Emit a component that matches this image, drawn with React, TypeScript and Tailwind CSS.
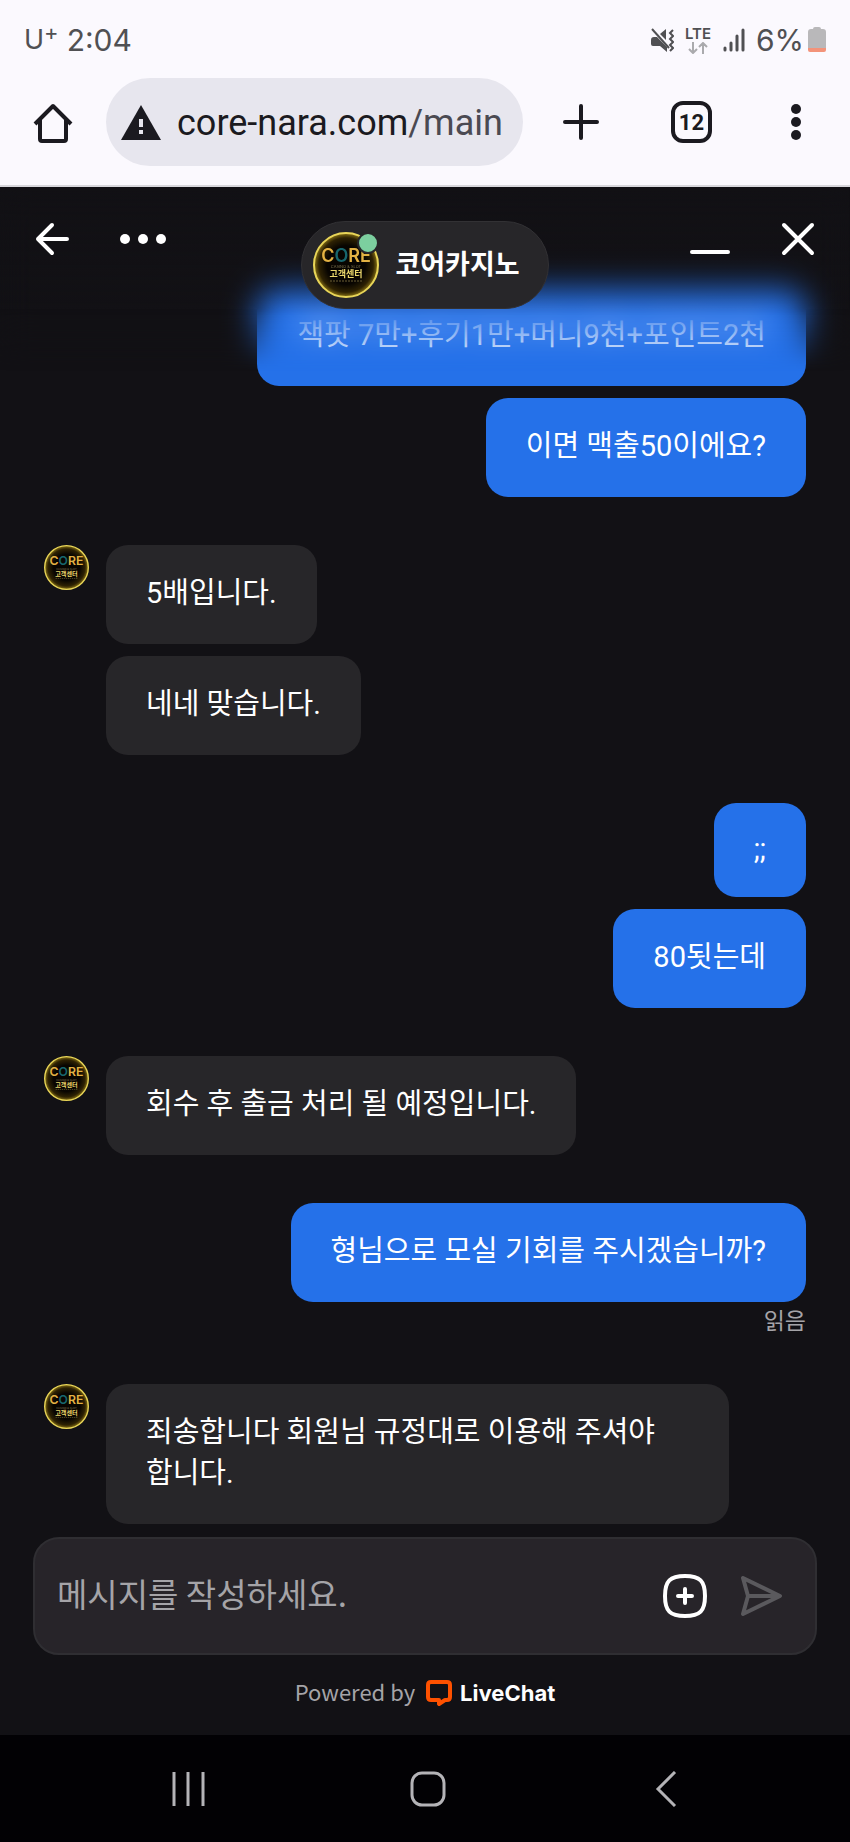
import React from 'react';

interface MessageGroup {
  id: number;
  from: 'agent' | 'visitor';
  messages: string[];
  read?: boolean;
}

const groups: MessageGroup[] = [
  {
    id: 1,
    from: 'visitor',
    messages: ['잭팟 7만+후기1만+머니9천+포인트2천', '이면 맥출50이에요?'],
  },
  { id: 2, from: 'agent', messages: ['5배입니다.', '네네 맞습니다.'] },
  { id: 3, from: 'visitor', messages: [';;', '80됫는데'] },
  { id: 4, from: 'agent', messages: ['회수 후 출금 처리 될 예정입니다.'] },
  { id: 5, from: 'visitor', messages: ['형님으로 모실 기회를 주시겠습니까?'], read: true },
  { id: 6, from: 'agent', messages: ['죄송합니다 회원님 규정대로 이용해 주셔야 합니다.'] },
];

const Avatar: React.FC<{ className: string }> = ({ className }) => (
  <svg viewBox="0 0 66 66" className={className} role="img" aria-label="CORE 고객센터">
    <defs>
      <radialGradient id="avatarGlow">
        <stop offset="0.6" stopColor="#080501" />
        <stop offset="0.85" stopColor="#2e2203" />
        <stop offset="1" stopColor="#8a7416" />
      </radialGradient>
    </defs>
    <circle cx="33" cy="33" r="32" fill="url(#avatarGlow)" stroke="#e8d558" strokeWidth="2" />
    <text
      x="33"
      y="30"
      fontSize="18"
      fontWeight="600"
      textAnchor="middle"
      fill="#e3b243"
      fontFamily="Inter, 'Liberation Sans', sans-serif"
    >
      C<tspan fill="#17666d">O</tspan>RE
    </text>
    <text x="33" y="36" fontSize="4" textAnchor="middle" fill="#7d7350" fontFamily="Inter, sans-serif">
      CASINO &amp; SLOT
    </text>
    <text
      x="33"
      y="45"
      fontSize="9"
      fontWeight="700"
      textAnchor="middle"
      fill="#ecd86c"
      fontFamily="'Noto Sans CJK KR', sans-serif"
    >
      고객센터
    </text>
    <path d="M17 49h33" stroke="#6d6136" strokeWidth="1" strokeDasharray="2 1" />
  </svg>
);

const StatusBar: React.FC = () => (
  <div className="flex h-16 items-center justify-between pt-4 pr-6 pl-6 font-['Inter','Liberation_Sans',sans-serif] text-[30px] text-[#505053]">
    <div className="flex items-center gap-2">
      <span className="flex">
        <span className="text-[27px]">U</span>
        <sup className="top-0 self-start text-[22px] leading-6">+</sup>
      </span>
      <span>2:04</span>
    </div>
    <div className="flex items-center gap-[10px]">
      <svg viewBox="0 0 24 24" className="h-6 w-6" fill="#505053" aria-label="진동">
        <path d="M1 12q0-3 3-3h3l10 10v5l-7-6H3q-2 0-2-2z" />
        <path d="M10 6l6-5v11z" />
        <path d="M2 1l17 19" stroke="#505053" strokeWidth="2" />
        <path d="M23 2l-3 3 3 3-3 3 3 3-3 3 3 3-3 3" fill="none" stroke="#505053" strokeWidth="2" />
      </svg>
      <div className="flex w-7 flex-col items-center">
        <span className="text-[15px] leading-4 font-semibold">LTE</span>
        <svg viewBox="0 0 20 12" className="h-3 w-5" fill="none" stroke="#aaaaad" strokeWidth="2">
          <path d="M5 0v11M1 7l4 4 4-4M15 12V1M11 5l4-4 4 4" />
        </svg>
      </div>
      <svg viewBox="0 0 24 24" className="h-6 w-6" stroke="#505053" strokeWidth="3" strokeLinecap="round">
        <path d="M3 20v2M9 15v7M15 8v14M21 2v20" />
      </svg>
      <div className="flex items-center gap-1">
        <span>6%</span>
        <svg viewBox="0 0 18 26" className="h-[26px] w-[18px]">
          <path d="M5 2q0-2 2-2h4q2 0 2 2h2q3 0 3 3v16H0V5q0-3 3-3z" fill="#b9b8ba" />
          <path d="M0 21h18v2q0 2-2 2H2q-2 0-2-2z" fill="#f3937a" />
        </svg>
      </div>
    </div>
  </div>
);

const BrowserBar: React.FC = () => (
  <div className="flex items-center border-b-2 border-[#d8d7dc] pt-[14px] pr-9 pb-[19px] pl-8 font-['Roboto','Liberation_Sans',sans-serif] text-[#1b1a20]">
    <button aria-label="홈" className="mr-8">
      <svg viewBox="0 0 42 42" className="h-[42px] w-[42px]" fill="none" stroke="#1b1a20" strokeWidth="4" strokeLinejoin="round">
        <path d="M3 23L21 5l18 18" />
        <path d="M8 19v19q0 2 2 2h22q2 0 2-2V19" />
      </svg>
    </button>
    <div className="flex h-22 flex-1 items-center rounded-full bg-[#e7e6ee] pr-5 pl-[15px]">
      <svg viewBox="0 0 40 35" className="mr-4 h-[35px] w-10 shrink-0" aria-label="주의 요함">
        <path d="M20 0l20 35H0z" fill="#1b1a20" />
        <path d="M18 14h4v8h-4zM18 25h4v4h-4z" fill="#e7e6ee" />
      </svg>
      <a href="#main" className="pt-0.5 text-[36px] whitespace-nowrap">
        core-nara.com<span className="text-[#4b4a52]">/main</span>
      </a>
    </div>
    <button aria-label="새 탭" className="ml-10">
      <svg viewBox="0 0 36 36" className="h-9 w-9" stroke="#1b1a20" strokeWidth="4" strokeLinecap="round">
        <path d="M18 2v32M2 18h32" />
      </svg>
    </button>
    <button
      aria-label="탭 12개"
      className="ml-[72px] flex h-[42px] w-[42px] items-center justify-center rounded-xl border-4 border-[#1b1a20] text-[22px] font-bold"
    >
      12
    </button>
    <button aria-label="메뉴" className="ml-[66px]">
      <svg viewBox="0 0 36 36" className="h-9 w-9" fill="#1b1a20">
        <circle cx="18" cy="5" r="5" />
        <circle cx="18" cy="18" r="5" />
        <circle cx="18" cy="31" r="5" />
      </svg>
    </button>
  </div>
);

// Floats over the message list, so older messages blur out beneath it.
const ChatHeader: React.FC = () => (
  <header className="pointer-events-none absolute inset-x-0 top-0 z-10 h-46">
    <div className="absolute inset-0 bg-linear-to-b from-[#121115]/60 to-transparent to-70% backdrop-blur-lg [mask-image:linear-gradient(to_bottom,black_66%,transparent_100%)]" />
    <div className="pointer-events-auto relative flex items-start justify-between px-[34px] pt-[34px]">
      <div className="flex flex-1 items-center gap-[50px]">
        <button aria-label="뒤로">
          <svg viewBox="0 0 36 36" className="h-9 w-9" fill="none" stroke="white" strokeWidth="4" strokeLinecap="round" strokeLinejoin="round">
            <path d="M18 4L4 18l14 14M4 18h29" />
          </svg>
        </button>
        <button aria-label="더 보기">
          <svg viewBox="0 0 46 10" className="h-[10px] w-[46px]" fill="white">
            <circle cx="5" cy="5" r="5" />
            <circle cx="23" cy="5" r="5" />
            <circle cx="41" cy="5" r="5" />
          </svg>
        </button>
      </div>
      <div className="flex h-22 items-center rounded-full border border-[#323134] bg-[#272629] pr-7 pl-[11px]">
        <div className="relative mr-4">
          <Avatar className="h-[66px] w-[66px]" />
          <span className="absolute top-0 right-0 h-[22px] w-[22px] rounded-full border-2 border-[#272629] bg-[#7ccf9f]" />
        </div>
        <h1 className="pb-1 text-[27px] font-bold text-white">코어카지노</h1>
      </div>
      <div className="flex flex-1 items-center justify-end gap-[50px]">
        <button aria-label="최소화">
          <svg viewBox="0 0 40 36" className="h-9 w-10" stroke="white" strokeWidth="4" strokeLinecap="round">
            <path d="M2 31h36" />
          </svg>
        </button>
        <button aria-label="닫기">
          <svg viewBox="0 0 36 36" className="h-9 w-9" stroke="white" strokeWidth="4" strokeLinecap="round">
            <path d="M4 4l28 28M32 4L4 32" />
          </svg>
        </button>
      </div>
    </div>
  </header>
);

const Bubble: React.FC<{ text: string; from: MessageGroup['from'] }> = ({ text, from }) => {
  const color = from === 'visitor' ? 'bg-[#2571e9]' : 'bg-[#272629]';
  // Hangul needs a taller line than plain punctuation
  const leading = /[가-힣]/.test(text) ? 'leading-[41px]' : 'leading-9';

  return (
    <p
      className={`max-w-[89%] rounded-[22px] px-10 pt-7 pb-[30px] font-['Roboto','Noto_Sans_CJK_KR',sans-serif] text-[29px] break-keep text-white ${color} ${leading}`}
    >
      {text}
    </p>
  );
};

const ChatGroup: React.FC<{ group: MessageGroup }> = ({ group }) => {
  const bubbles = group.messages.map((text) => <Bubble key={text} text={text} from={group.from} />);

  if (group.from === 'visitor') {
    return (
      <li className="flex flex-col items-end">
        <div className="flex w-full flex-col items-end gap-3">{bubbles}</div>
        {group.read && <span className="text-[23px] leading-[34px] text-[#a5a4a8]">읽음</span>}
      </li>
    );
  }

  return (
    <li className="flex items-start gap-[17px]">
      <Avatar className="h-[45px] w-[45px] shrink-0" />
      <div className="flex flex-1 flex-col items-start gap-3">{bubbles}</div>
    </li>
  );
};

const MessageForm: React.FC = () => (
  <form
    className="mx-[33px] mt-[13px] flex h-[118px] items-center rounded-[26px] border-2 border-[#2f2e32] bg-[#272429] pr-8 pl-[22px]"
    onSubmit={(e) => e.preventDefault()}
  >
    <input
      type="text"
      aria-label="메시지"
      placeholder="메시지를 작성하세요."
      className="min-w-0 flex-1 bg-transparent pb-1 text-[33px] text-white outline-none placeholder:text-[#a5a4a8]"
    />
    <button type="button" aria-label="첨부" className="mr-8">
      <svg viewBox="0 0 44 44" className="h-11 w-11" fill="none" stroke="white" strokeWidth="4" strokeLinecap="round">
        <path d="M22 2C37 2 42 7 42 22S37 42 22 42 2 37 2 22 7 2 22 2z" />
        <path d="M22 15v14M15 22h14" />
      </svg>
    </button>
    <button type="submit" aria-label="보내기">
      <svg viewBox="0 0 44 44" className="h-11 w-11" fill="none" stroke="#5a595d" strokeWidth="4" strokeLinejoin="round" strokeLinecap="round">
        <path d="M4 4l37 18L4 40l5-18zM9 22h31" />
      </svg>
    </button>
  </form>
);

const NavigationBar: React.FC = () => (
  <nav className="flex h-[107px] items-center justify-between bg-[#020104] px-[168px]">
    <button aria-label="최근 앱">
      <svg viewBox="0 0 38 36" className="h-9 w-[38px]" stroke="#b4b3b7" strokeWidth="3">
        <path d="M6 1v34M20 1v34M35 1v34" />
      </svg>
    </button>
    <button aria-label="홈 화면">
      <svg viewBox="0 0 36 36" className="h-9 w-9" fill="none" stroke="#b4b3b7" strokeWidth="3">
        <rect x="2" y="2" width="32" height="32" rx="10" />
      </svg>
    </button>
    <button aria-label="이전">
      <svg viewBox="0 0 32 36" className="h-9 w-8" fill="none" stroke="#b4b3b7" strokeWidth="3">
        <path d="M25 1L8 18l17 17" />
      </svg>
    </button>
  </nav>
);

const App: React.FC = () => {
  return (
    <div className="flex min-h-screen flex-col bg-[#121115] font-['Noto_Sans_CJK_KR',sans-serif]">
      <div className="bg-[#fbf9fe]">
        <StatusBar />
        <BrowserBar />
      </div>

      <main className="relative flex-1">
        <ChatHeader />
        <ul className="flex flex-col gap-12 px-11 pt-[100px]">
          {groups.map((group) => (
            <ChatGroup key={group.id} group={group} />
          ))}
        </ul>
        <MessageForm />
        <div className="flex h-20 items-center justify-center gap-[11px] pb-1 text-[22px]">
          <span className="pb-1 text-[#a5a4a8]">Powered by</span>
          <a href="#livechat" className="flex items-center gap-2 font-['Inter',sans-serif] font-bold text-white">
            <svg viewBox="0 0 26 26" className="h-[26px] w-[26px]" fill="none" stroke="#fe5100" strokeWidth="4" strokeLinejoin="round">
              <path d="M5 2h16q3 0 3 3v12q0 3-3 3h-2l-6 4v-4H5q-3 0-3-3V5q0-3 3-3z" />
            </svg>
            LiveChat
          </a>
        </div>
      </main>

      <NavigationBar />
    </div>
  );
};

export default App;
